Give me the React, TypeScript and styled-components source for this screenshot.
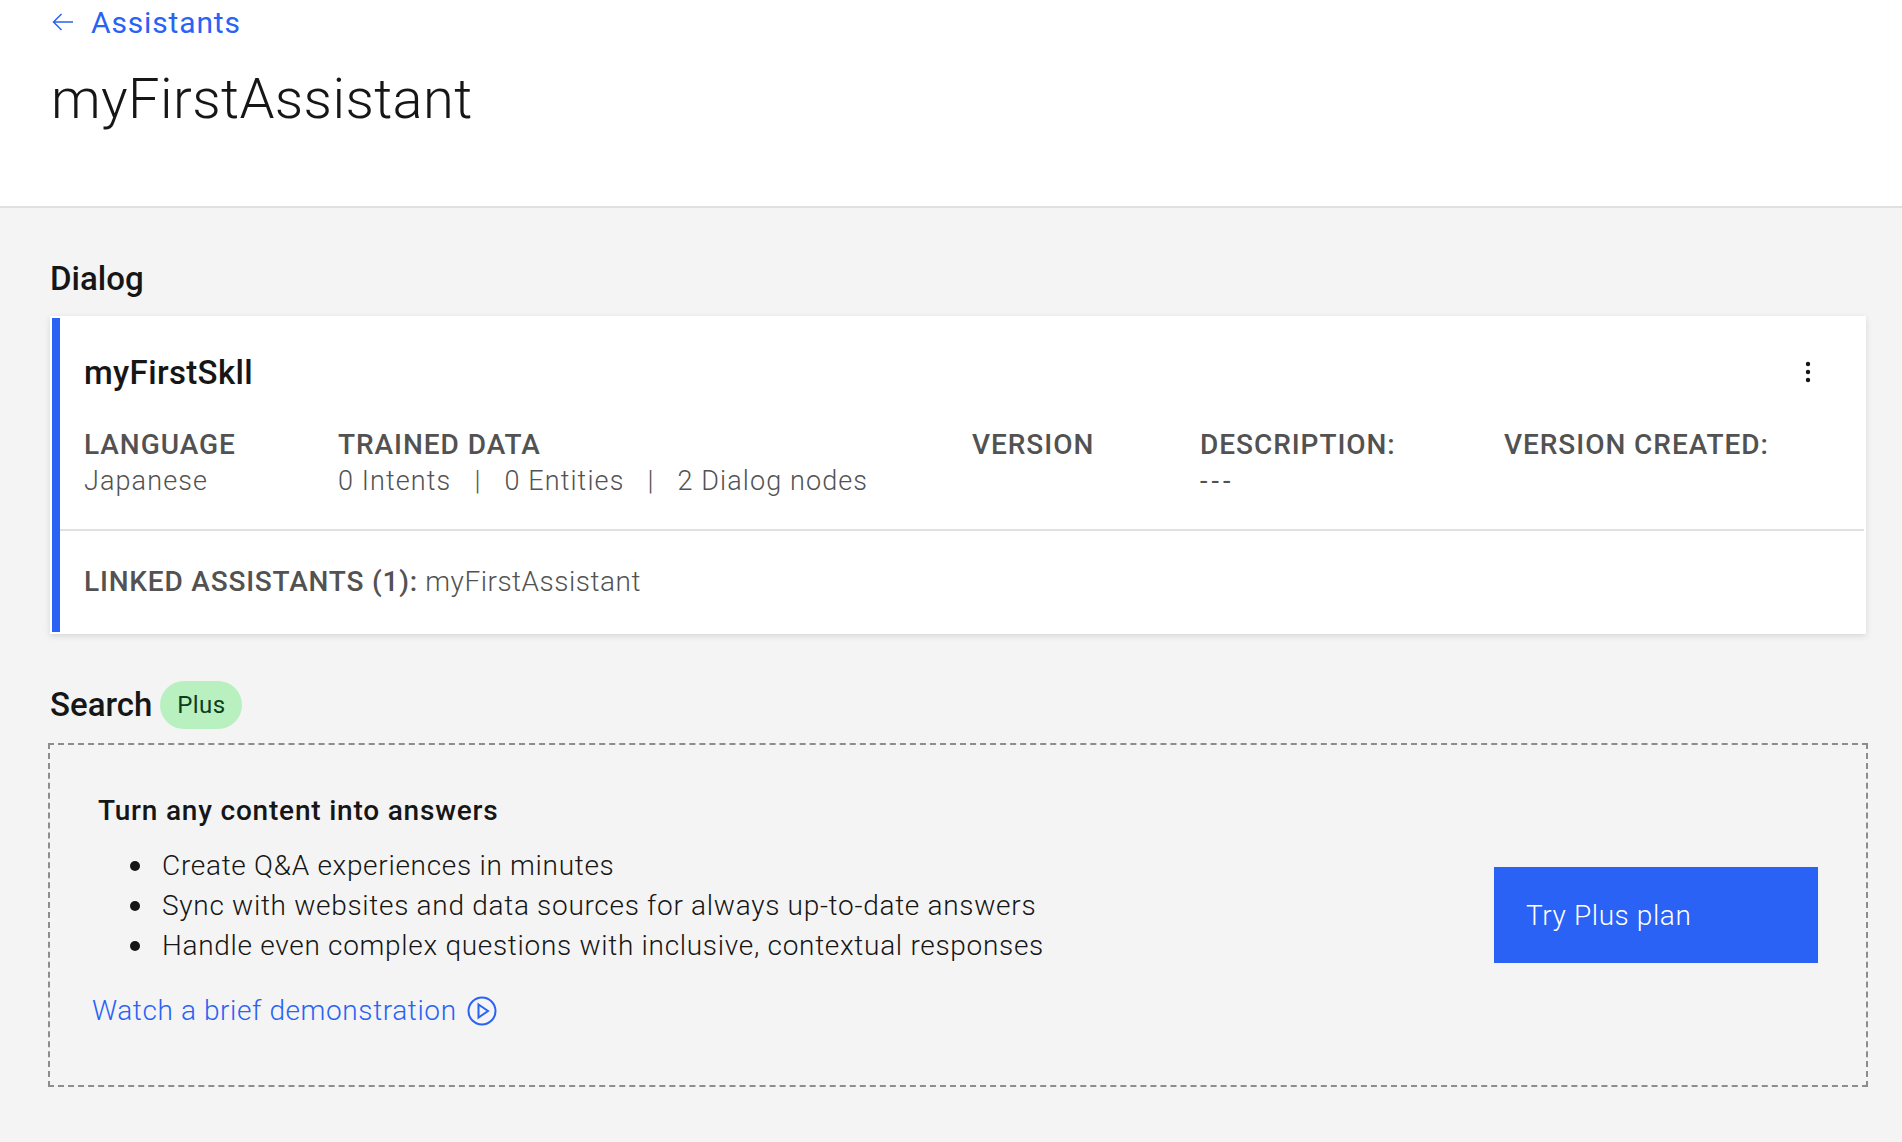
import React from "react";
import styled, { createGlobalStyle } from "styled-components";

const Global = createGlobalStyle`
  html, body { margin: 0; padding: 0; background: #f4f4f4; }
  body { font-family: Roboto, "Noto Sans", sans-serif; color: #161616; }
  * { box-sizing: border-box; }
`;

const Page = styled.div`
  width: 1902px;
  height: 1142px;
  overflow: hidden;
  background: #f4f4f4;
`;

const Header = styled.header`
  height: 208px;
  background: #fff;
  border-bottom: 2px solid #e0e0e0;
  padding: 3px 0 0 50px;
`;

const BackLink = styled.a`
  display: flex;
  align-items: center;
  gap: 17px;
  height: 38px;
  padding-left: 2px;
  color: #2962f5;
  font-size: 30px;
  font-weight: 400;
  letter-spacing: 0.85px;
`;

const Title = styled.h1`
  margin: 25px 0 0 1px;
  font-size: 56px;
  line-height: 66px;
  font-weight: 300;
  letter-spacing: 0.4px;
  color: #161616;
`;

const Main = styled.main`
  padding: 0 33px 0 48px;
`;

const SectionTitle = styled.h2`
  margin: 0;
  padding-left: 2px;
  font-size: 33px;
  line-height: 40px;
  font-weight: 500;
  color: #161616;
`;

const DialogHeading = styled(SectionTitle)`
  margin-top: 51px;
  margin-bottom: 17px;
`;

const Card = styled.section`
  margin-left: 2px;
  width: 1816px;
  height: 318px;
  background: #fff;
  padding: 2px;
  box-shadow: 0 2px 6px rgba(0, 0, 0, 0.12);
`;

const CardInner = styled.div`
  height: 100%;
  border-left: 8px solid #2962f5;
  display: flex;
  flex-direction: column;
`;

const CardTop = styled.div`
  height: 213px;
  border-bottom: 2px solid #e0e0e0;
  padding: 33px 0 0 24px;
`;

const CardTitleRow = styled.div`
  display: flex;
  justify-content: space-between;
  align-items: center;
  height: 42px;
  padding-right: 52px;
`;

const SkillName = styled.div`
  font-size: 33px;
  font-weight: 500;
  letter-spacing: 0.35px;
  color: #161616;
`;

const Kebab = styled.svg`
  width: 8px;
  height: 24px;
  fill: #161616;
`;

const Meta = styled.div`
  margin-top: 34px;
  display: grid;
  grid-template-columns: 254px 634px 228px 304px auto;
`;

const MetaLabel = styled.div`
  font-size: 28px;
  line-height: 36px;
  font-weight: 500;
  letter-spacing: 0.95px;
  color: #525252;
`;

const MetaValue = styled.div`
  font-size: 27px;
  line-height: 36px;
  font-weight: 300;
  letter-spacing: 1.1px;
  color: #525252;
  white-space: pre;
`;

const Dashes = styled(MetaValue)`
  letter-spacing: 4px;
  font-weight: 400;
`;

const CardBottom = styled.div`
  flex: 1;
  display: flex;
  align-items: center;
  padding-left: 24px;
  font-size: 28px;
  color: #525252;
  letter-spacing: 0.5px;
  font-weight: 300;
  white-space: pre;
`;

const Strong = styled.strong`
  font-weight: 500;
  letter-spacing: 0.8px;
`;

const SearchHeading = styled.div`
  margin-top: 46px;
  display: flex;
  align-items: center;
  gap: 8px;
  height: 50px;
`;

const PlusTag = styled.span`
  width: 82px;
  height: 48px;
  border-radius: 24px;
  background: #b8f0c0;
  color: #0e3d1c;
  font-size: 24px;
  font-weight: 400;
  letter-spacing: 0.4px;
  display: flex;
  align-items: center;
  justify-content: center;
`;

const Promo = styled.section`
  margin-top: 13px;
  width: 1820px;
  height: 344px;
  border: 2px dashed #8d8d8d;
  display: flex;
  justify-content: space-between;
  align-items: center;
  padding: 0 48px 0 0;
`;

const PromoBody = styled.div`
  padding-bottom: 6px;
`;

const PromoTitle = styled.div`
  margin-left: 48px;
  font-size: 28px;
  line-height: 36px;
  font-weight: 500;
  letter-spacing: 0.8px;
  color: #161616;
`;

const Bullets = styled.ul`
  margin: 17px 0 0 0;
  padding: 0 0 0 80px;
  list-style: none;
`;

const Bullet = styled.li`
  display: flex;
  align-items: center;
  gap: 22px;
  font-size: 28px;
  line-height: 40px;
  font-weight: 300;
  letter-spacing: 0.7px;
  color: #161616;

  &::before {
    content: "";
    flex: none;
    width: 10px;
    height: 10px;
    border-radius: 50%;
    background: #161616;
  }
`;

const DemoLink = styled.a`
  margin: 25px 0 0 42px;
  display: flex;
  align-items: center;
  gap: 10px;
  color: #2962f5;
  font-size: 28px;
  line-height: 40px;
  font-weight: 300;
  letter-spacing: 0.6px;
`;

const TryButton = styled.button`
  width: 324px;
  height: 96px;
  border: 0;
  background: #2962f5;
  color: #fff;
  font: 300 28px Roboto, sans-serif;
  letter-spacing: 0.6px;
  text-align: left;
  padding: 0 32px;
`;

const ArrowLeft = () => (
  <svg width="22" height="22" viewBox="0 0 22 22" fill="none" stroke="#2962f5" strokeWidth="1.5">
    <path d="M21 11H1.5M9.5 3L1.5 11l8 8" />
  </svg>
);

const PlayCircle = () => (
  <svg width="30" height="30" viewBox="0 0 30 30" fill="none" stroke="#2962f5" strokeWidth="2">
    <circle cx="15" cy="15" r="13.5" />
    <path d="M11.5 8.5L21 15l-9.5 6.5z" />
  </svg>
);

export default function App() {
  return (
    <Page>
      <Global />
      <Header>
        <BackLink>
          <ArrowLeft />
          Assistants
        </BackLink>
        <Title>myFirstAssistant</Title>
      </Header>
      <Main>
        <DialogHeading>Dialog</DialogHeading>
        <Card>
          <CardInner>
            <CardTop>
              <CardTitleRow>
                <SkillName>myFirstSkll</SkillName>
                <Kebab viewBox="0 0 8 24">
                  <circle cx="4" cy="4" r="2.2" />
                  <circle cx="4" cy="12" r="2.2" />
                  <circle cx="4" cy="20" r="2.2" />
                </Kebab>
              </CardTitleRow>
              <Meta>
                <div>
                  <MetaLabel>LANGUAGE</MetaLabel>
                  <MetaValue>Japanese</MetaValue>
                </div>
                <div>
                  <MetaLabel>TRAINED DATA</MetaLabel>
                  <MetaValue>{"0 Intents   |   0 Entities   |   2 Dialog nodes"}</MetaValue>
                </div>
                <div>
                  <MetaLabel>VERSION</MetaLabel>
                </div>
                <div>
                  <MetaLabel>DESCRIPTION:</MetaLabel>
                  <Dashes>---</Dashes>
                </div>
                <div>
                  <MetaLabel>VERSION CREATED:</MetaLabel>
                </div>
              </Meta>
            </CardTop>
            <CardBottom>
              <Strong>LINKED ASSISTANTS (1):</Strong> myFirstAssistant
            </CardBottom>
          </CardInner>
        </Card>
        <SearchHeading>
          <SectionTitle as="span">Search</SectionTitle>
          <PlusTag>Plus</PlusTag>
        </SearchHeading>
        <Promo>
          <PromoBody>
            <PromoTitle>Turn any content into answers</PromoTitle>
            <Bullets>
              <Bullet>Create Q&amp;A experiences in minutes</Bullet>
              <Bullet>Sync with websites and data sources for always up-to-date answers</Bullet>
              <Bullet>Handle even complex questions with inclusive, contextual responses</Bullet>
            </Bullets>
            <DemoLink>
              Watch a brief demonstration
              <PlayCircle />
            </DemoLink>
          </PromoBody>
          <TryButton>Try Plus plan</TryButton>
        </Promo>
      </Main>
    </Page>
  );
}
